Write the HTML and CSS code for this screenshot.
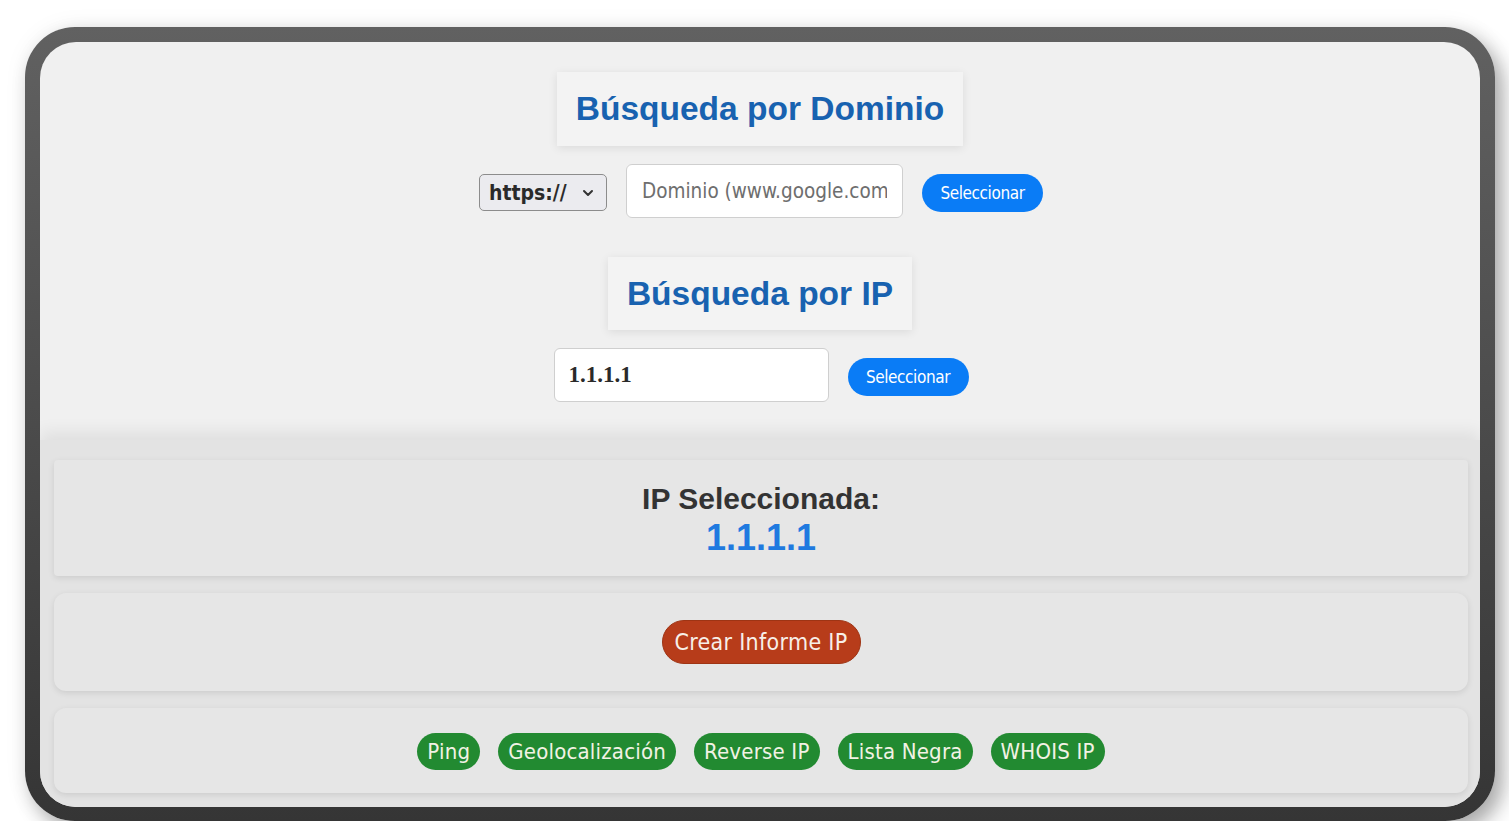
FILE: index.html
```html
<!DOCTYPE html>
<html lang="es">
<head>
<meta charset="utf-8">
<title>Búsqueda</title>
<link rel="stylesheet" href="styles.css">
</head>
<body>
<div class="frame">
  <div class="screen">
    <section class="search">
      <h2 class="title">Búsqueda por Dominio</h2>
      <div class="row">
        <div class="select">
          <span>https://</span>
          <svg class="chev" width="12" height="8" viewBox="0 0 12 8"><path d="M2 2 L6 6 L10 2" fill="none" stroke="#333" stroke-width="2" stroke-linecap="round" stroke-linejoin="round"/></svg>
        </div>
        <input class="field domain" type="text" placeholder="Dominio (www.google.com)">
        <button class="btn-blue">Seleccionar</button>
      </div>
      <h2 class="title title-ip">Búsqueda por IP</h2>
      <div class="row">
        <input class="field ip" type="text" value="1.1.1.1">
        <button class="btn-blue">Seleccionar</button>
      </div>
    </section>
    <section class="lower">
      <div class="panel selected">
        <div class="sel-label">IP Seleccionada:</div>
        <div class="sel-ip">1.1.1.1</div>
      </div>
      <div class="panel report">
        <button class="btn-red">Crear Informe IP</button>
      </div>
      <div class="panel tools">
        <button class="btn-green">Ping</button>
        <button class="btn-green">Geolocalización</button>
        <button class="btn-green">Reverse IP</button>
        <button class="btn-green">Lista Negra</button>
        <button class="btn-green">WHOIS IP</button>
      </div>
    </section>
  </div>
</div>
</body>
</html>
```
FILE: styles.css
```css
html, body {
  margin: 0;
  padding: 0;
  background: #ffffff;
}
body {
  font-family: "Liberation Sans", Arial, sans-serif;
  overflow: hidden;
}
.frame {
  box-sizing: border-box;
  margin: 27px 0 0 25px;
  width: 1470px;
  height: 794px;
  padding: 15px 15px 14px 15px;
  border-radius: 50px;
  background: linear-gradient(#616161, #353535);
  box-shadow: 8px 10px 20px rgba(0, 0, 0, 0.32), 0 0 24px rgba(0, 0, 0, 0.06);
}
.screen {
  height: 100%;
  border-radius: 36px;
  background: #f0f0f0;
  overflow: hidden;
  display: flex;
  flex-direction: column;
}
.search {
  padding-top: 30px;
  height: 398px;
  box-sizing: border-box;
  display: flex;
  flex-direction: column;
  align-items: center;
}
.title {
  margin: 0;
  height: 74px;
  line-height: 74px;
  padding: 0 19px;
  background: #f3f3f3;
  box-shadow: 0 2px 9px rgba(0, 0, 0, 0.09);
  color: #1862b0;
  font-family: "Liberation Sans", Arial, sans-serif;
  font-weight: bold;
  font-size: 33.5px;
  margin-bottom: 18px;
}
.title-ip {
  margin-top: 39px;
  height: 73px;
  line-height: 73px;
}
.row {
  display: flex;
  align-items: center;
  gap: 19px;
  height: 54px;
  padding-left: 2px;
}
.select {
  box-sizing: border-box;
  width: 128px;
  height: 37px;
  margin-top: 3px;
  border: 1.5px solid #8c8c8c;
  border-radius: 5px;
  background: #ebebef;
  display: flex;
  align-items: center;
  justify-content: space-between;
  padding: 0 12px 0 9px;
  font-family: "DejaVu Sans Condensed", "DejaVu Sans", sans-serif;
  font-weight: 600;
  font-size: 21px;
  color: #2a2a2a;
}
.field {
  box-sizing: border-box;
  height: 54px;
  border: 1px solid #cfcfcf;
  border-radius: 6px;
  background: #ffffff;
  outline: none;
  padding: 0 15px;
}
.domain {
  width: 277px;
  font-family: "DejaVu Sans Condensed", "DejaVu Sans", sans-serif;
  font-size: 20.5px;
  color: #333;
}
.domain::placeholder {
  color: #6e6e6e;
}
.ip {
  width: 275px;
  font-family: "Liberation Serif", "Times New Roman", serif;
  font-weight: bold;
  font-size: 23px;
  color: #2a2a2a;
  padding-left: 14px;
}
.btn-blue {
  width: 121px;
  height: 38px;
  margin-top: 3px;
  border: none;
  border-radius: 19px;
  background: #0a7cf6;
  color: #ffffff;
  font-family: "DejaVu Sans Condensed", "DejaVu Sans", sans-serif;
  font-size: 17px;
  letter-spacing: -0.4px;
  padding: 0;
}
.lower {
  flex: 1;
  background: #e3e3e3;
  box-shadow: 0 -8px 16px rgba(0, 0, 0, 0.07);
  padding: 20px 12px 14px 14px;
  display: flex;
  flex-direction: column;
  gap: 17px;
}
.panel {
  background: #e6e6e6;
  border-radius: 12px;
  box-shadow: 0 2px 6px rgba(0, 0, 0, 0.1);
  display: flex;
  align-items: center;
  justify-content: center;
}
.selected {
  height: 116px;
  box-sizing: border-box;
  flex-direction: column;
  justify-content: flex-start;
  padding-top: 22px;
  border-radius: 4px;
}
.sel-label {
  font-weight: bold;
  font-size: 30px;
  line-height: 34px;
  color: #333333;
}
.sel-ip {
  font-weight: bold;
  font-size: 36px;
  line-height: 44px;
  color: #1f7ae0;
}
.report {
  height: 98px;
}
.btn-red {
  width: 199px;
  height: 44px;
  border: 1px solid #9e3414;
  border-radius: 22px;
  background: #b73c1a;
  color: #f7efe8;
  font-family: "DejaVu Sans Condensed", "DejaVu Sans", sans-serif;
  font-size: 23px;
  letter-spacing: 0.3px;
  padding: 0;
}
.tools {
  height: 85px;
  gap: 18px;
  padding-top: 2px;
  box-sizing: border-box;
}
.btn-green {
  height: 37px;
  border: none;
  border-radius: 19px;
  background: #228a31;
  color: #f2f2e4;
  font-family: "DejaVu Sans Condensed", "DejaVu Sans", sans-serif;
  font-size: 22px;
  letter-spacing: 0.2px;
  padding: 0 10px;
}
```
